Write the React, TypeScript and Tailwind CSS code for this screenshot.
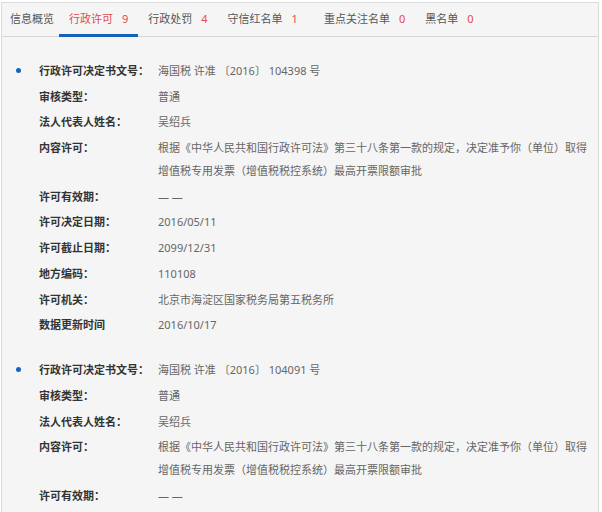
import React from 'react';

interface Field {
  label: string;
  value: string[];
}

const tabs = [
  { name: '信息概览', count: null as number | null, pad: 'pl-[8px] pr-[5px]' },
  { name: '行政许可', count: 9, pad: 'px-[10px]' },
  { name: '行政处罚', count: 4, pad: 'px-[10px]' },
  { name: '守信红名单', count: 1, pad: 'pl-[10px] pr-[16px]' },
  { name: '重点关注名单', count: 0, pad: 'px-[10px]' },
  { name: '黑名单', count: 0, pad: 'px-[10px]' },
];

const content = [
  '根据《中华人民共和国行政许可法》第三十八条第一款的规定，决定准予你（单位）取得',
  '增值税专用发票（增值税税控系统）最高开票限额审批',
];

const records: Field[][] = [
  [
    { label: '行政许可决定书文号：', value: ['海国税 许准 〔2016〕 104398 号'] },
    { label: '审核类型：', value: ['普通'] },
    { label: '法人代表人姓名：', value: ['吴绍兵'] },
    { label: '内容许可：', value: content },
    { label: '许可有效期：', value: ['— —'] },
    { label: '许可决定日期：', value: ['2016/05/11'] },
    { label: '许可截止日期：', value: ['2099/12/31'] },
    { label: '地方编码：', value: ['110108'] },
    { label: '许可机关：', value: ['北京市海淀区国家税务局第五税务所'] },
    { label: '数据更新时间', value: ['2016/10/17'] },
  ],
  [
    { label: '行政许可决定书文号：', value: ['海国税 许准 〔2016〕 104091 号'] },
    { label: '审核类型：', value: ['普通'] },
    { label: '法人代表人姓名：', value: ['吴绍兵'] },
    { label: '内容许可：', value: content },
    { label: '许可有效期：', value: ['— —'] },
    { label: '许可决定日期：', value: ['2016/05/11'] },
  ],
];

const Record: React.FC<{ fields: Field[] }> = ({ fields }) => (
  <div className="pt-[22px] flex flex-col gap-[2.7px]">
    {fields.map((field, index) => (
      <div key={index} className="flex leading-[23px]">
        <div className="w-[37px] flex justify-start pl-[14px] pt-[9px]">
          {index === 0 && <span className="block w-[5px] h-[5px] rounded-full bg-[#1565c0]" />}
        </div>
        <div className="w-[119px] font-bold text-[#333]">{field.label}</div>
        <div className="flex-1 text-[#666]">
          {field.value.map((line, i) => (
            <div key={i}>{line}</div>
          ))}
        </div>
      </div>
    ))}
  </div>
);

export default function App() {
  return (
    <div
      className="w-[602px] h-[512px] overflow-hidden bg-white pt-[2px] text-[11px]"
      style={{ fontFamily: '"Noto Sans", "Noto Sans CJK SC", sans-serif' }}
    >
      <div className="ml-[1px] mr-[3px] h-[520px] border border-[#dcdcdc] bg-[#f5f5f5]">
        {/* Tab bar */}
        <div className="flex h-[34px] border-b border-[#d6d6d6]">
          {tabs.map((tab, index) => (
            <div
              key={tab.name}
              className={`relative flex items-center ${tab.pad} ${
                index === 1 ? 'text-[#e24a4f]' : 'text-[#555]'
              }`}
            >
              <span>{tab.name}</span>
              {tab.count !== null && <span className="ml-[9px] text-[#e24a4f]">{tab.count}</span>}
              {index === 1 && (
                <span className="absolute left-0 right-0 bottom-[-1px] h-[3px] bg-[#1560b8]" />
              )}
            </div>
          ))}
        </div>

        {records.map((fields, index) => (
          <Record key={index} fields={fields} />
        ))}
      </div>
    </div>
  );
}
